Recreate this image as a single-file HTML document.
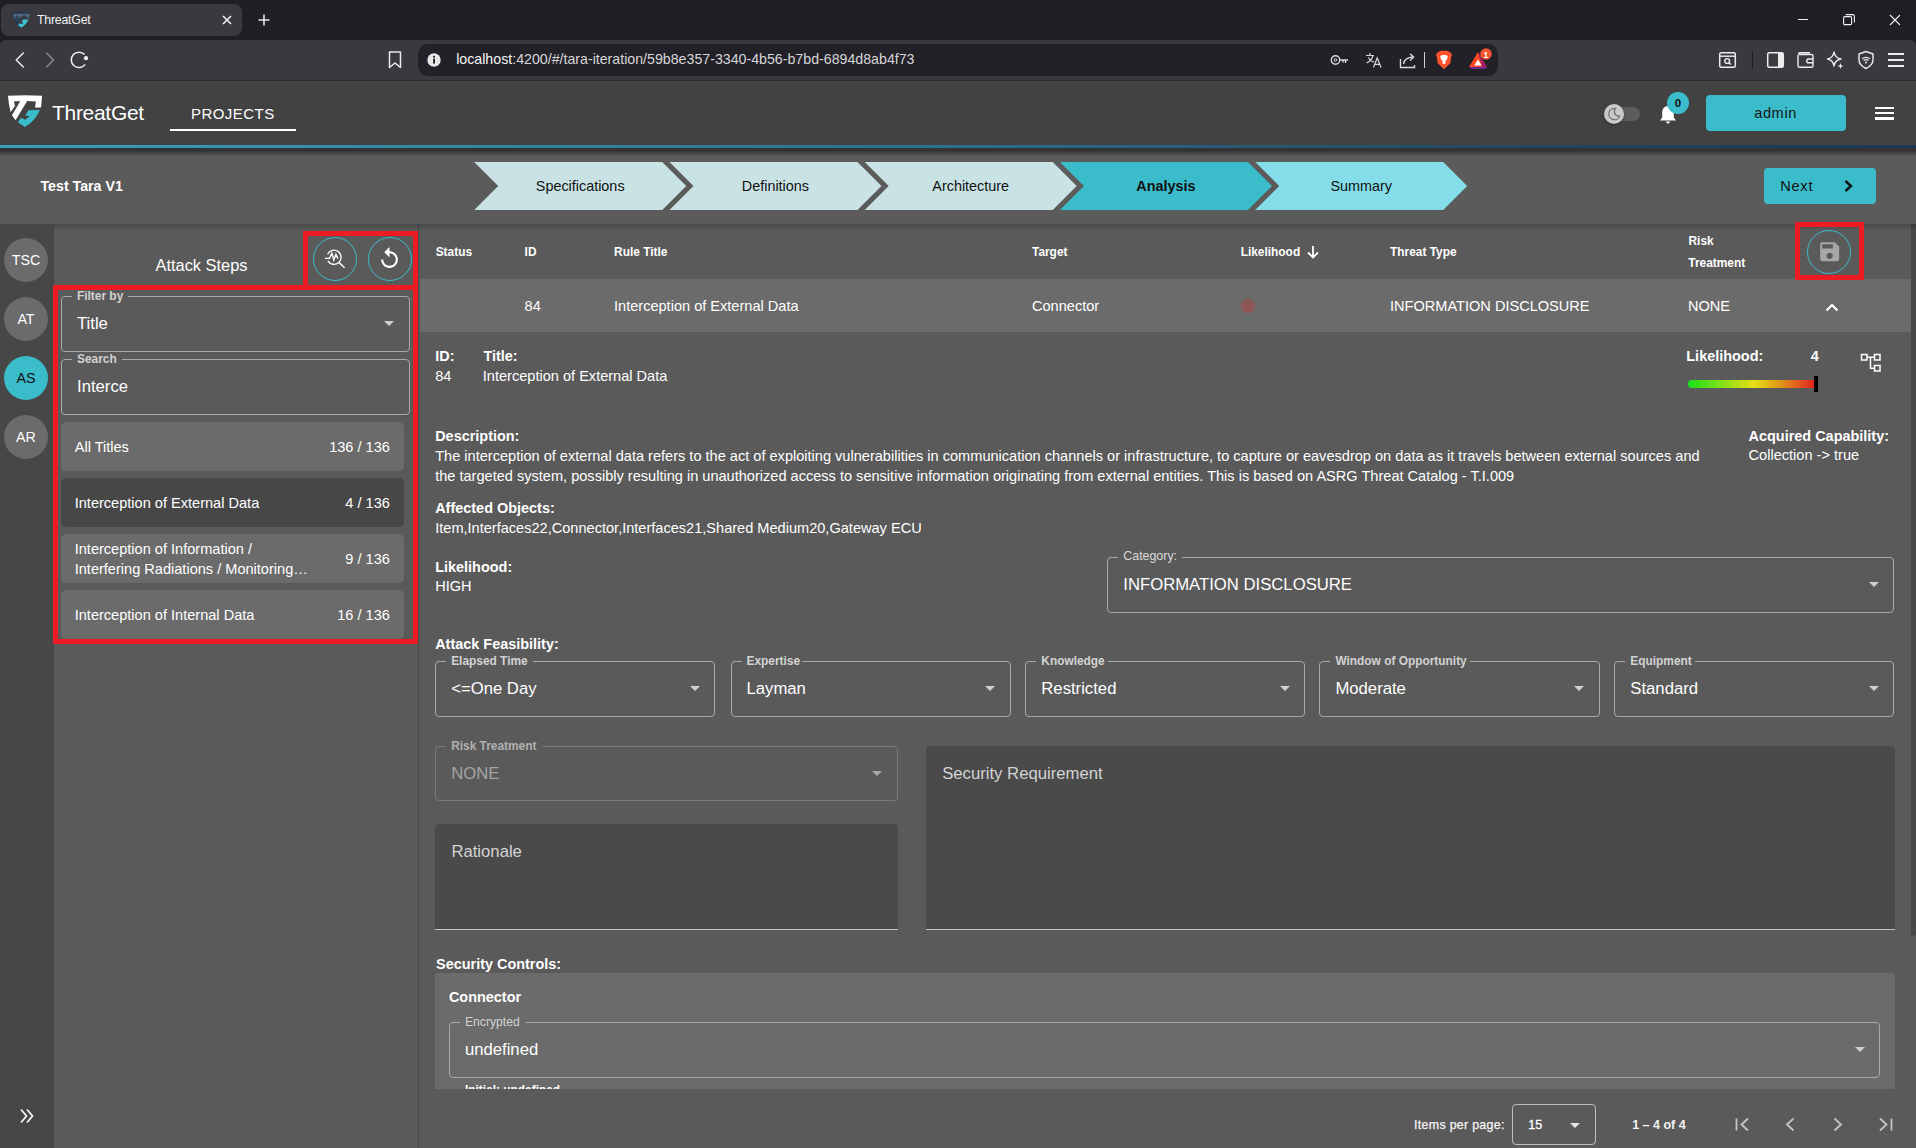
<!DOCTYPE html>
<html><head><meta charset="utf-8">
<style>
*{box-sizing:border-box;margin:0;padding:0}
html,body{width:1916px;height:1148px;overflow:hidden;background:#5a5a5a;font-family:"Liberation Sans",sans-serif;color:#fff}
.a{position:absolute}
.t{position:absolute;white-space:nowrap}
svg{position:absolute;overflow:visible}
</style></head>
<body>
<div class="a" style="left:0px;top:0px;width:1916px;height:50px;background:#1f1e24"></div>
<div class="a" style="left:1px;top:4px;width:241px;height:32px;background:#3a393f;border-radius:8px"></div>
<div class="a" style="left:0px;top:40px;width:1916px;height:41px;background:#3a393f;border-radius:6px 6px 0 0"></div>
<div class="a" style="left:418px;top:44px;width:1080px;height:32px;background:#222127;border-radius:10px"></div>
<div class="t" style="left:37px;top:13.26px;font-size:12.4px;line-height:14.88px;color:#f1f1f1;letter-spacing:-0.25px;">ThreatGet</div>
<svg style="left:12.5px;top:11.6px" width="16.9" height="16" viewBox="3 2 36 34"><defs><linearGradient id="fg" x1="0" y1="0" x2="0" y2="1"><stop offset="0" stop-color="#0f2b4a"/><stop offset="0.22" stop-color="#5f7890"/><stop offset="0.45" stop-color="#2e4d6c"/><stop offset="1" stop-color="#15314f"/></linearGradient></defs><path d="M3.97,3.81 Q21.2,2.6 38.07,3.81 L37.07,15.56 L30.95,15.56 L31.94,9.43 L23.17,9.1 L11.59,28.14 L7.94,23.34 L16.22,9.27 L10.1,9.27 L10.92,13.9 L6.62,20.36 Q4.5,12 3.97,3.81 Z" fill="url(#fg)"/><path d="M35.9,18.04 L24.5,18.2 L21.2,23.5 L25.5,24.33 L21.2,27.8 L16.9,25.8 L13.9,30.3 L20.85,34.9 Q30.5,30 35.9,18.04 Z" fill="#3cc6d6"/></svg>
<svg style="left:222px;top:15px" width="10" height="10" viewBox="0 0 10 10"><path d="M1 1 L9 9 M9 1 L1 9" stroke="#f0f0f0" stroke-width="1.6"/></svg>
<svg style="left:258px;top:14px" width="12" height="12" viewBox="0 0 12 12"><path d="M6 0.5 L6 11.5 M0.5 6 L11.5 6" stroke="#e8e8e8" stroke-width="1.6"/></svg>
<div class="a" style="left:1798px;top:19px;width:10px;height:1.2px;background:#f0f0f0"></div>
<svg style="left:1843px;top:14px" width="12" height="12" viewBox="0 0 12 12"><rect x="0.6" y="2.6" width="8" height="8" rx="1.2" fill="none" stroke="#f0f0f0" stroke-width="1.1"/><path d="M2.6 0.6 L9.6 0.6 Q11.4 0.6 11.4 2.4 L11.4 8.6" fill="none" stroke="#f0f0f0" stroke-width="1.1"/></svg>
<svg style="left:1889px;top:14px" width="12" height="12" viewBox="0 0 12 12"><path d="M1 1 L11 11 M11 1 L1 11" stroke="#f0f0f0" stroke-width="1.1"/></svg>
<svg style="left:0;top:40px" width="120" height="40" viewBox="0 40 120 40"><path d="M23.8 52.5 L16.3 60 L23.8 67.5" fill="none" stroke="#f2f2f2" stroke-width="1.4"/><path d="M46.3 52.8 L53.5 60 L46.3 67.2" fill="none" stroke="#8a8a8e" stroke-width="1.4"/><path d="M85.2 64.4 A7.7 7.7 0 1 1 84.6 54.6" fill="none" stroke="#f2f2f2" stroke-width="1.5"/><circle cx="86" cy="58.2" r="2.1" fill="#f2f2f2"/></svg>
<svg style="left:387px;top:51px" width="16" height="18" viewBox="0 0 16 18"><path d="M2.5 1 L13.5 1 L13.5 16.5 L8 12 L2.5 16.5 Z" fill="none" stroke="#ececec" stroke-width="1.5" stroke-linejoin="round"/></svg>
<svg style="left:427px;top:53px" width="14" height="14" viewBox="0 0 14 14"><circle cx="7" cy="7" r="6.7" fill="#e6e6e6"/><rect x="6.1" y="5.6" width="1.9" height="5" fill="#222127"/><rect x="6.1" y="2.9" width="1.9" height="1.8" fill="#222127"/></svg>
<div class="t" style="left:456.2px;top:51.3px;font-size:14.2px;line-height:17px;color:#d6d6d8"><span style="color:#f4f4f4">localhost</span>:4200/#/tara-iteration/59b8e357-3340-4b56-b7bd-6894d8ab4f73</div>
<svg style="left:1330px;top:52px" width="20" height="16" viewBox="0 0 20 16"><circle cx="5.5" cy="8" r="4.2" fill="none" stroke="#d8d8d8" stroke-width="1.4"/><circle cx="5.5" cy="8" r="1.3" fill="none" stroke="#d8d8d8" stroke-width="1"/><path d="M9.7 8 L18 8 M15.5 8 L15.5 11 M13 8 L13 10.5" fill="none" stroke="#d8d8d8" stroke-width="1.4"/></svg>
<svg style="left:1365px;top:52px" width="18" height="16" viewBox="0 0 18 16"><path d="M1 3.5 L9 3.5 M5 1 L5 3.5 M8 3.5 Q6.5 9 1.5 11 M3.5 5.5 Q5.5 9.5 9 10" fill="none" stroke="#d8d8d8" stroke-width="1.2"/><path d="M8.5 15.5 L12.2 6 L16 15.5 M9.8 12.3 L14.6 12.3" fill="none" stroke="#d8d8d8" stroke-width="1.2"/></svg>
<svg style="left:1399px;top:52px" width="18" height="17" viewBox="0 0 18 17"><path d="M1.5 7 L1.5 15.5 L15.5 15.5 L15.5 13" fill="none" stroke="#d8d8d8" stroke-width="1.4"/><path d="M4.5 12 Q5.5 5.5 14 5 M11 1.8 L14.6 5 L11 8.4" fill="none" stroke="#d8d8d8" stroke-width="1.4"/></svg>
<div class="a" style="left:1424px;top:52px;width:1.3px;height:16px;background:#d0d0d0"></div>
<svg style="left:1435px;top:50px" width="18" height="20" viewBox="0 0 18 20"><path d="M3 2 L6 0.8 L12 0.8 L15 2 L17 4.5 L16 8 L15.5 13 L9 19.2 L2.5 13 L2 8 L1 4.5 Z" fill="#fb542b"/><path d="M5.2 6 L7.5 5 L10.5 5 L12.8 6 L12 9.5 L10.2 11 L10.8 13 L9 14.2 L7.2 13 L7.8 11 L6 9.5 Z" fill="#fff"/></svg>
<svg style="left:1468px;top:47px" width="28" height="24" viewBox="0 0 28 24"><path d="M10 5 L1 20 L19 20 Z" fill="#ff4724"/><path d="M10 5 L19 20 L14 20 Z" fill="#9e1f63"/><path d="M1 20 L19 20 L17 22 L3 22 Z" fill="#662d91"/><path d="M10 12.5 L6.3 18.5 L13.7 18.5 Z" fill="#fff"/><circle cx="18" cy="7" r="5.8" fill="#f4542f"/></svg>
<div class="t" style="left:1185.9px;width:600px;text-align:center;top:50.05px;font-size:8.5px;line-height:10.2px;color:#fff;font-weight:700;">1</div>
<svg style="left:1718px;top:51px" width="20" height="18" viewBox="0 0 20 18"><rect x="1.7" y="1.7" width="15.6" height="14.6" rx="1.5" fill="none" stroke="#ececec" stroke-width="1.5"/><path d="M1.7 5.2 L17.3 5.2" stroke="#ececec" stroke-width="1.4"/><circle cx="9.2" cy="10" r="2.4" fill="none" stroke="#ececec" stroke-width="1.4"/><path d="M10.9 11.7 L12.8 13.6" stroke="#ececec" stroke-width="1.4"/></svg>
<div class="a" style="left:1751.5px;top:52px;width:1.5px;height:16px;background:#1d1c21"></div>
<svg style="left:1766px;top:51px" width="20" height="18" viewBox="0 0 20 18"><rect x="1.7" y="1.7" width="15.6" height="14.6" rx="1.5" fill="none" stroke="#ececec" stroke-width="1.5"/><rect x="12" y="2" width="5" height="14" fill="#ececec"/></svg>
<svg style="left:1796px;top:51px" width="20" height="18" viewBox="0 0 20 18"><path d="M2 4 L2 14.8 Q2 16.3 3.5 16.3 L15.5 16.3 Q17 16.3 17 14.8 L17 5 Q17 3.5 15.5 3.5 L3 3.5 M3 3.5 Q2 2 4 1.8 L14 1.8" fill="none" stroke="#ececec" stroke-width="1.4"/><path d="M17 8 L12.5 8 Q10.8 8 10.8 9.9 Q10.8 11.8 12.5 11.8 L17 11.8" fill="none" stroke="#ececec" stroke-width="1.4"/></svg>
<svg style="left:1826px;top:50px" width="20" height="20" viewBox="0 0 20 20"><path d="M8 2 Q9 8 15 9 Q9 10 8 16 Q7 10 1.5 9 Q7 8 8 2 Z" fill="none" stroke="#ececec" stroke-width="1.4" stroke-linejoin="round"/><path d="M14.5 13 L15.3 15.2 L17.5 16 L15.3 16.8 L14.5 19 L13.7 16.8 L11.5 16 L13.7 15.2 Z" fill="#ececec"/></svg>
<svg style="left:1857px;top:50px" width="18" height="20" viewBox="0 0 18 20"><path d="M9 1.5 L16 4 L16 10 Q16 15 9 18.5 Q2 15 2 10 L2 4 Z" fill="none" stroke="#ececec" stroke-width="1.4" stroke-linejoin="round"/><path d="M5.2 8.8 Q9 5.8 12.8 8.8 M6.6 10.6 Q9 8.8 11.4 10.6" fill="none" stroke="#ececec" stroke-width="1.2"/><circle cx="9" cy="12.6" r="1" fill="#ececec"/></svg>
<div class="a" style="left:1887.7px;top:53.3px;width:16.3px;height:1.5px;background:#ececec"></div>
<div class="a" style="left:1887.7px;top:59.3px;width:16.3px;height:1.5px;background:#ececec"></div>
<div class="a" style="left:1887.7px;top:65.3px;width:16.3px;height:1.5px;background:#ececec"></div>
<div class="a" style="left:0px;top:81px;width:1916px;height:64px;background:#424242"></div>
<div class="a" style="left:0px;top:80px;width:1916px;height:1px;background:#2c2b30"></div>
<div class="a" style="left:0px;top:145px;width:1916px;height:3px;background:linear-gradient(90deg,#389fbc 0%,#2b6f8c 50%,#214663 80%,#1c3753 100%)"></div>
<div class="a" style="left:0px;top:148px;width:1916px;height:76px;background:#5b5b5b"></div>
<div class="a" style="left:0px;top:148px;width:1916px;height:8px;background:linear-gradient(#323232 0%,#343434 35%,rgba(91,91,91,0) 100%)"></div>
<svg style="left:4px;top:92px" width="42" height="38" viewBox="0 0 42 38"><path d="M3.97,3.81 Q21.2,2.6 38.07,3.81 L37.07,15.56 L30.95,15.56 L31.94,9.43 L23.17,9.1 L11.59,28.14 L7.94,23.34 L16.22,9.27 L10.1,9.27 L10.92,13.9 L6.62,20.36 Q4.5,12 3.97,3.81 Z" fill="#fff"/><path d="M35.9,18.04 L24.5,18.2 L21.2,23.5 L25.5,24.33 L21.2,27.8 L16.9,25.8 L13.9,30.3 L20.85,34.9 Q30.5,30 35.9,18.04 Z" fill="#3bbccb"/></svg>
<div class="t" style="left:52px;top:100.42px;font-size:21px;line-height:25.2px;color:#fff;letter-spacing:-0.3px;">ThreatGet</div>
<div class="t" style="left:191px;top:104.90px;font-size:15px;line-height:18.0px;color:#fff;letter-spacing:0.45px;">PROJECTS</div>
<div class="a" style="left:170px;top:129px;width:126px;height:2px;background:#fff"></div>
<div class="t" style="left:40.5px;top:178.16px;font-size:14.2px;line-height:17.04px;color:#fff;font-weight:700;">Test Tara V1</div>
<div class="a" style="left:0px;top:224px;width:54px;height:924px;background:#474747"></div>
<div class="a" style="left:54px;top:224px;width:364px;height:924px;background:#5a5a5a"></div>
<div class="a" style="left:418px;top:224px;width:1px;height:924px;background:#4a4a4a"></div>
<div class="a" style="left:419px;top:224px;width:1497px;height:924px;background:#5a5a5a"></div>
<div class="a" style="left:1911px;top:224px;width:5px;height:712px;background:#474747;border-radius:0 0 3px 3px"></div>
<div class="a" style="left:54px;top:224px;width:1862px;height:6px;background:linear-gradient(rgba(0,0,0,.2),rgba(0,0,0,0))"></div>
<div class="a" style="left:0px;top:224px;width:54px;height:1px;background:#444"></div>
<svg style="left:0;top:0" width="1916" height="1148"><polygon points="474.2,162 662.2,162 686.2,186 662.2,210 474.2,210 498.2,186" fill="#c9e3e5"/><polygon points="669.45,162 857.45,162 881.45,186 857.45,210 669.45,210 693.45,186" fill="#c9e3e5"/><polygon points="864.7,162 1052.7,162 1076.7,186 1052.7,210 864.7,210 888.7,186" fill="#c9e3e5"/><polygon points="1059.95,162 1247.95,162 1271.95,186 1247.95,210 1059.95,210 1083.95,186" fill="#3bbccb"/><polygon points="1255.2,162 1443.2,162 1467.2,186 1443.2,210 1255.2,210 1279.2,186" fill="#84dde8"/></svg>
<div class="t" style="left:280.20000000000005px;width:600px;text-align:center;top:178.17px;font-size:14.4px;line-height:17.28px;color:#111;">Specifications</div>
<div class="t" style="left:475.45000000000005px;width:600px;text-align:center;top:178.17px;font-size:14.4px;line-height:17.28px;color:#111;">Definitions</div>
<div class="t" style="left:670.7px;width:600px;text-align:center;top:178.17px;font-size:14.4px;line-height:17.28px;color:#111;">Architecture</div>
<div class="t" style="left:865.95px;width:600px;text-align:center;top:178.17px;font-size:14.4px;line-height:17.28px;color:#111;font-weight:700;">Analysis</div>
<div class="t" style="left:1061.2px;width:600px;text-align:center;top:178.17px;font-size:14.4px;line-height:17.28px;color:#111;">Summary</div>
<div class="a" style="left:1764px;top:168px;width:112px;height:36px;background:#3bbccb;border-radius:4px"></div>
<div class="t" style="left:1780.2px;top:177.98px;font-size:14.6px;line-height:17.52px;color:#111;letter-spacing:0.75px;">Next</div>
<svg style="left:1843px;top:180px" width="12" height="12" viewBox="0 0 12 12"><path d="M2.5 1 L8 6 L2.5 11" fill="none" stroke="#111" stroke-width="2.4"/></svg>
<div class="a" style="left:1706px;top:95px;width:140px;height:36px;background:#3bbccb;border-radius:4px"></div>
<div class="t" style="left:1754.2px;top:104.58px;font-size:14.6px;line-height:17.52px;color:#151515;letter-spacing:0.6px;">admin</div>
<div class="a" style="left:1874.5px;top:106.8px;width:19.2px;height:2.3px;background:#fff"></div>
<div class="a" style="left:1874.5px;top:112.1px;width:19.2px;height:2.3px;background:#fff"></div>
<div class="a" style="left:1874.5px;top:117.4px;width:19.2px;height:2.3px;background:#fff"></div>
<div class="a" style="left:1612px;top:107px;width:28px;height:14px;background:#5c5c5c;border-radius:7px"></div>
<div class="a" style="left:1604px;top:104px;width:20px;height:20px;background:#cacaca;border-radius:50%;box-shadow:0 1px 2px rgba(0,0,0,.4)"></div>
<svg style="left:1606px;top:106px" width="16" height="16" viewBox="0 0 16 16"><path d="M9.5 2.6 A5.6 5.6 0 1 0 13.6 10.2 A4.6 4.6 0 0 1 9.5 2.6 Z" fill="none" stroke="#707070" stroke-width="1.3"/></svg>
<svg style="left:1658px;top:104px" width="20" height="21" viewBox="0 0 20 21"><path d="M10 2 C6.2 2 4.2 5 4.2 8.5 L4.2 13.5 L2 16.5 L18 16.5 L15.8 13.5 L15.8 8.5 C15.8 5 13.8 2 10 2 Z" fill="#fff"/><path d="M8 17.5 A2 2 0 0 0 12 17.5 Z" fill="#fff"/></svg>
<div class="a" style="left:1667px;top:92px;width:22px;height:22px;background:#3bbccb;border-radius:50%"></div>
<div class="t" style="left:1378px;width:600px;text-align:center;top:96.52px;font-size:11.5px;line-height:13.8px;color:#111;font-weight:700;">0</div>
<div class="a" style="left:4px;top:238.39999999999998px;width:44px;height:44px;background:#6b6b6b;border-radius:50%"></div>
<div class="t" style="left:-274px;width:600px;text-align:center;top:252.17px;font-size:14.3px;line-height:17.16px;color:#fff;">TSC</div>
<div class="a" style="left:4px;top:297.2px;width:44px;height:44px;background:#6b6b6b;border-radius:50%"></div>
<div class="t" style="left:-274px;width:600px;text-align:center;top:310.97px;font-size:14.3px;line-height:17.16px;color:#fff;">AT</div>
<div class="a" style="left:4px;top:356.0px;width:44px;height:44px;background:#3bbccb;border-radius:50%"></div>
<div class="t" style="left:-274px;width:600px;text-align:center;top:369.77px;font-size:14.3px;line-height:17.16px;color:#111;">AS</div>
<div class="a" style="left:4px;top:414.79999999999995px;width:44px;height:44px;background:#6b6b6b;border-radius:50%"></div>
<div class="t" style="left:-274px;width:600px;text-align:center;top:428.57px;font-size:14.3px;line-height:17.16px;color:#fff;">AR</div>
<svg style="left:18px;top:1107px" width="18" height="18" viewBox="0 0 18 18"><path d="M3 2.5 L8.5 9 L3 15.5 M9 2.5 L14.5 9 L9 15.5" fill="none" stroke="#fafafa" stroke-width="1.7"/></svg>
<div class="t" style="left:155.5px;top:255.78px;font-size:16.4px;line-height:19.68px;color:#fff;">Attack Steps</div>
<div class="a" style="left:313px;top:237px;width:44px;height:44px;border:1px solid #3bbccb;border-radius:50%"></div>
<div class="a" style="left:368px;top:237px;width:44px;height:44px;border:1px solid #3bbccb;border-radius:50%"></div>
<svg style="left:320px;top:244px" width="30" height="30" viewBox="320 244 30 30"><path d="M327.6 254.2 A7.1 7.1 0 1 1 327.9 260.9" fill="none" stroke="#fff" stroke-width="1.35"/><path d="M338.7 262.2 L344.6 267.8" stroke="#fff" stroke-width="1.5"/><path d="M324.9 258.4 L329.4 258.4 L331.9 253.2 L333.8 260 L335.9 254.2 L337.9 258.6" fill="none" stroke="#fff" stroke-width="1.35" stroke-linejoin="miter"/></svg>
<svg style="left:377.2px;top:246.3px" width="25" height="25" viewBox="0 0 24 24"><path d="M12 5V1L7 6l5 5V7c3.31 0 6 2.69 6 6s-2.69 6-6 6-6-2.69-6-6H4c0 4.42 3.58 8 8 8s8-3.58 8-8-3.58-8-8-8z" fill="#fff"/></svg>
<div class="a" style="left:61px;top:296px;width:349px;height:55.5px;border:1px solid #a9a9a9;border-radius:4px;"></div>
<div class="a" style="left:72px;top:294px;width:56px;height:4px;background:#5a5a5a"></div>
<div class="t" style="left:77px;top:288.94px;font-size:11.9px;line-height:14.28px;color:#d2d2d2;font-weight:700;">Filter by</div>
<div class="t" style="left:77px;top:314.29px;font-size:16.7px;line-height:20.04px;color:#fff;">Title</div>
<svg style="left:384.2px;top:321px" width="10" height="5" viewBox="0 0 10 5"><path d="M0 0 L10 0 L5 5 Z" fill="#cfcfcf"/></svg>
<div class="a" style="left:61px;top:359px;width:349px;height:55.5px;border:1px solid #a9a9a9;border-radius:4px;"></div>
<div class="a" style="left:72px;top:357px;width:50px;height:4px;background:#5a5a5a"></div>
<div class="t" style="left:77px;top:351.94px;font-size:11.9px;line-height:14.28px;color:#d2d2d2;font-weight:700;">Search</div>
<div class="t" style="left:77px;top:377.29px;font-size:16.7px;line-height:20.04px;color:#fff;">Interce</div>
<div class="a" style="left:61px;top:422px;width:343px;height:48.6px;background:#6b6b6b;border-radius:5px"></div>
<div class="t" style="left:74.7px;top:439.01px;font-size:14.57px;line-height:17.48px;color:#fff;">All Titles</div>
<div class="t" style="right:1526.1px;top:439.01px;font-size:14.57px;line-height:17.48px;color:#fff;">136 / 136</div>
<div class="a" style="left:61px;top:478px;width:343px;height:48.6px;background:#474747;border-radius:5px"></div>
<div class="t" style="left:74.7px;top:495.01px;font-size:14.57px;line-height:17.48px;color:#fff;">Interception of External Data</div>
<div class="t" style="right:1526.1px;top:495.01px;font-size:14.57px;line-height:17.48px;color:#fff;">4 / 136</div>
<div class="a" style="left:61px;top:534px;width:343px;height:48.6px;background:#6b6b6b;border-radius:5px"></div>
<div class="t" style="right:1526.1px;top:551.01px;font-size:14.57px;line-height:17.48px;color:#fff;">9 / 136</div>
<div class="a" style="left:61px;top:590px;width:343px;height:48.6px;background:#6b6b6b;border-radius:5px"></div>
<div class="t" style="left:74.7px;top:607.01px;font-size:14.57px;line-height:17.48px;color:#fff;">Interception of Internal Data</div>
<div class="t" style="right:1526.1px;top:607.01px;font-size:14.57px;line-height:17.48px;color:#fff;">16 / 136</div>
<div class="t" style="left:74.7px;top:540.81px;font-size:14.57px;line-height:17.48px;color:#fff;">Interception of Information /</div>
<div class="t" style="left:74.7px;top:561.11px;font-size:14.57px;line-height:17.48px;color:#fff;">Interfering Radiations / Monitoring…</div>
<div class="a" style="left:303px;top:231px;width:115px;height:59px;border:5px solid #ed1c24"></div>
<div class="a" style="left:53px;top:285px;width:364.5px;height:359px;border:5px solid #ed1c24"></div>
<div class="a" style="left:420px;top:279px;width:1491px;height:53px;background:#6b6b6b"></div>
<div class="t" style="left:435.7px;top:244.84px;font-size:11.9px;line-height:14.28px;color:#fff;font-weight:700;">Status</div>
<div class="t" style="left:524.6px;top:244.84px;font-size:11.9px;line-height:14.28px;color:#fff;font-weight:700;">ID</div>
<div class="t" style="left:614.1px;top:244.84px;font-size:11.9px;line-height:14.28px;color:#fff;font-weight:700;">Rule Title</div>
<div class="t" style="left:1032px;top:244.84px;font-size:11.9px;line-height:14.28px;color:#fff;font-weight:700;">Target</div>
<div class="t" style="left:1240.7px;top:244.84px;font-size:11.9px;line-height:14.28px;color:#fff;font-weight:700;">Likelihood</div>
<svg style="left:1306px;top:245px" width="14" height="14" viewBox="0 0 14 14"><path d="M7 1 L7 12.5 M2 7.5 L7 12.5 L12 7.5" fill="none" stroke="#fff" stroke-width="1.8"/></svg>
<div class="t" style="left:1390.1px;top:244.84px;font-size:11.9px;line-height:14.28px;color:#fff;font-weight:700;">Threat Type</div>
<div class="t" style="left:1688.5px;top:234.24px;font-size:11.9px;line-height:14.28px;color:#fff;font-weight:700;">Risk</div>
<div class="t" style="left:1688.3px;top:256.24px;font-size:11.9px;line-height:14.28px;color:#fff;font-weight:700;">Treatment</div>
<div class="a" style="left:1807px;top:230px;width:44px;height:44px;border:1px solid #3bbccb;border-radius:50%"></div>
<svg style="left:1816.5px;top:239.2px" width="25.3" height="25.3" viewBox="0 0 24 24"><path d="M17 3H5c-1.11 0-2 .9-2 2v14c0 1.1.89 2 2 2h14c1.1 0 2-.9 2-2V7l-4-4zm-5 16c-1.66 0-3-1.34-3-3s1.34-3 3-3 3 1.34 3 3-1.34 3-3 3zm3-10H5V5h10v4z" fill="#a6a6a6"/></svg>
<div class="a" style="left:1795px;top:222px;width:69px;height:58px;border:5px solid #ed1c24"></div>
<div class="t" style="left:524.6px;top:297.81px;font-size:14.57px;line-height:17.48px;color:#fff;">84</div>
<div class="t" style="left:614px;top:297.81px;font-size:14.57px;line-height:17.48px;color:#fff;">Interception of External Data</div>
<div class="t" style="left:1032px;top:297.81px;font-size:14.57px;line-height:17.48px;color:#fff;">Connector</div>
<div class="a" style="left:1241px;top:299px;width:14px;height:14px;background:#8f5656;border-radius:50%"></div>
<div class="t" style="left:1390px;top:297.81px;font-size:14.57px;line-height:17.48px;color:#fff;">INFORMATION DISCLOSURE</div>
<div class="t" style="left:1688px;top:297.81px;font-size:14.57px;line-height:17.48px;color:#fff;">NONE</div>
<svg style="left:1825px;top:302px" width="14" height="10" viewBox="0 0 14 10"><path d="M1.5 8.5 L7 3 L12.5 8.5" fill="none" stroke="#fff" stroke-width="2.2"/></svg>
<div class="t" style="left:435.2px;top:348.02px;font-size:14.45px;line-height:17.34px;color:#fff;font-weight:700;">ID:</div>
<div class="t" style="left:435.2px;top:367.61px;font-size:14.57px;line-height:17.48px;color:#fff;">84</div>
<div class="t" style="left:483.4px;top:348.02px;font-size:14.45px;line-height:17.34px;color:#fff;font-weight:700;">Title:</div>
<div class="t" style="left:482.8px;top:367.61px;font-size:14.57px;line-height:17.48px;color:#fff;">Interception of External Data</div>
<div class="t" style="left:1686.3px;top:347.82px;font-size:14.45px;line-height:17.34px;color:#fff;font-weight:700;">Likelihood:</div>
<div class="t" style="left:1810.7px;top:347.82px;font-size:14.45px;line-height:17.34px;color:#fff;font-weight:700;">4</div>
<div class="a" style="left:1688px;top:380px;width:126px;height:8px;background:linear-gradient(90deg,#17e017 0%,#7ee01a 25%,#e3e014 52%,#e0901a 75%,#e0241e 100%);border-radius:4px 0 0 4px"></div>
<div class="a" style="left:1814px;top:376px;width:3.6px;height:16px;background:#000"></div>
<svg style="left:1860px;top:353px" width="22" height="20" viewBox="0 0 22 20"><rect x="1.5" y="1.5" width="5.5" height="5.5" fill="none" stroke="#fff" stroke-width="1.5"/><rect x="14.5" y="1.5" width="5.5" height="5.5" fill="none" stroke="#fff" stroke-width="1.5"/><rect x="14.5" y="12.5" width="5.5" height="5.5" fill="none" stroke="#fff" stroke-width="1.5"/><path d="M7 4.2 L14.5 4.2 M10.5 4.2 L10.5 15.2 L14.5 15.2" fill="none" stroke="#fff" stroke-width="1.5"/></svg>
<div class="t" style="left:435.2px;top:427.72px;font-size:14.45px;line-height:17.34px;color:#fff;font-weight:700;">Description:</div>
<div class="t" style="left:435.2px;top:448.01px;font-size:14.57px;line-height:17.48px;color:#fff;">The interception of external data refers to the act of exploiting vulnerabilities in communication channels or infrastructure, to capture or eavesdrop on data as it travels between external sources and</div>
<div class="t" style="left:435.2px;top:467.71px;font-size:14.57px;line-height:17.48px;color:#fff;">the targeted system, possibly resulting in unauthorized access to sensitive information originating from external entities. This is based on ASRG Threat Catalog - T.I.009</div>
<div class="t" style="left:1748.6px;top:427.52px;font-size:14.45px;line-height:17.34px;color:#fff;font-weight:700;">Acquired Capability:</div>
<div class="t" style="left:1748.6px;top:447.41px;font-size:14.57px;line-height:17.48px;color:#fff;">Collection -&gt; true</div>
<div class="t" style="left:435.2px;top:500.22px;font-size:14.45px;line-height:17.34px;color:#fff;font-weight:700;">Affected Objects:</div>
<div class="t" style="left:435.2px;top:519.81px;font-size:14.57px;line-height:17.48px;color:#fff;">Item,Interfaces22,Connector,Interfaces21,Shared Medium20,Gateway ECU</div>
<div class="t" style="left:435.2px;top:559.12px;font-size:14.45px;line-height:17.34px;color:#fff;font-weight:700;">Likelihood:</div>
<div class="t" style="left:435.2px;top:578.31px;font-size:14.57px;line-height:17.48px;color:#fff;">HIGH</div>
<div class="a" style="left:1107.3px;top:557px;width:787px;height:55.5px;border:1px solid #a9a9a9;border-radius:4px;"></div>
<div class="a" style="left:1118.3px;top:555px;width:64px;height:4px;background:#5a5a5a"></div>
<div class="t" style="left:1123.3px;top:549.46px;font-size:12.4px;line-height:14.88px;color:#dadada;">Category:</div>
<div class="t" style="left:1123.3px;top:575.29px;font-size:16.7px;line-height:20.04px;color:#fff;">INFORMATION DISCLOSURE</div>
<svg style="left:1868.5px;top:582px" width="10" height="5" viewBox="0 0 10 5"><path d="M0 0 L10 0 L5 5 Z" fill="#cfcfcf"/></svg>
<div class="t" style="left:435.2px;top:636.42px;font-size:14.45px;line-height:17.34px;color:#fff;font-weight:700;">Attack Feasibility:</div>
<div class="a" style="left:435.2px;top:661px;width:280.2px;height:55.5px;border:1px solid #a9a9a9;border-radius:4px;"></div>
<div class="a" style="left:446.2px;top:659px;width:87px;height:4px;background:#5a5a5a"></div>
<div class="t" style="left:451.2px;top:653.94px;font-size:11.9px;line-height:14.28px;color:#d2d2d2;font-weight:700;">Elapsed Time</div>
<div class="t" style="left:451.2px;top:679.29px;font-size:16.7px;line-height:20.04px;color:#fff;">&lt;=One Day</div>
<svg style="left:689.6px;top:686px" width="10" height="5" viewBox="0 0 10 5"><path d="M0 0 L10 0 L5 5 Z" fill="#cfcfcf"/></svg>
<div class="a" style="left:730.5px;top:661px;width:280.2px;height:55.5px;border:1px solid #a9a9a9;border-radius:4px;"></div>
<div class="a" style="left:741.5px;top:659px;width:60px;height:4px;background:#5a5a5a"></div>
<div class="t" style="left:746.5px;top:653.94px;font-size:11.9px;line-height:14.28px;color:#d2d2d2;font-weight:700;">Expertise</div>
<div class="t" style="left:746.5px;top:679.29px;font-size:16.7px;line-height:20.04px;color:#fff;">Layman</div>
<svg style="left:984.9000000000001px;top:686px" width="10" height="5" viewBox="0 0 10 5"><path d="M0 0 L10 0 L5 5 Z" fill="#cfcfcf"/></svg>
<div class="a" style="left:1025.3px;top:661px;width:280.2px;height:55.5px;border:1px solid #a9a9a9;border-radius:4px;"></div>
<div class="a" style="left:1036.3px;top:659px;width:72px;height:4px;background:#5a5a5a"></div>
<div class="t" style="left:1041.3px;top:653.94px;font-size:11.9px;line-height:14.28px;color:#d2d2d2;font-weight:700;">Knowledge</div>
<div class="t" style="left:1041.3px;top:679.29px;font-size:16.7px;line-height:20.04px;color:#fff;">Restricted</div>
<svg style="left:1279.7px;top:686px" width="10" height="5" viewBox="0 0 10 5"><path d="M0 0 L10 0 L5 5 Z" fill="#cfcfcf"/></svg>
<div class="a" style="left:1319.4px;top:661px;width:280.2px;height:55.5px;border:1px solid #a9a9a9;border-radius:4px;"></div>
<div class="a" style="left:1330.4px;top:659px;width:140px;height:4px;background:#5a5a5a"></div>
<div class="t" style="left:1335.4px;top:653.94px;font-size:11.9px;line-height:14.28px;color:#d2d2d2;font-weight:700;">Window of Opportunity</div>
<div class="t" style="left:1335.4px;top:679.29px;font-size:16.7px;line-height:20.04px;color:#fff;">Moderate</div>
<svg style="left:1573.8000000000002px;top:686px" width="10" height="5" viewBox="0 0 10 5"><path d="M0 0 L10 0 L5 5 Z" fill="#cfcfcf"/></svg>
<div class="a" style="left:1614.3px;top:661px;width:280.2px;height:55.5px;border:1px solid #a9a9a9;border-radius:4px;"></div>
<div class="a" style="left:1625.3px;top:659px;width:70px;height:4px;background:#5a5a5a"></div>
<div class="t" style="left:1630.3px;top:653.94px;font-size:11.9px;line-height:14.28px;color:#d2d2d2;font-weight:700;">Equipment</div>
<div class="t" style="left:1630.3px;top:679.29px;font-size:16.7px;line-height:20.04px;color:#fff;">Standard</div>
<svg style="left:1868.7px;top:686px" width="10" height="5" viewBox="0 0 10 5"><path d="M0 0 L10 0 L5 5 Z" fill="#cfcfcf"/></svg>
<div class="a" style="left:435.2px;top:746px;width:462.4px;height:55px;border:1px solid #7a7a7a;border-radius:4px;"></div>
<div class="a" style="left:446.2px;top:744px;width:96px;height:4px;background:#5a5a5a"></div>
<div class="t" style="left:451.2px;top:738.94px;font-size:11.9px;line-height:14.28px;color:#b0b0b0;font-weight:700;">Risk Treatment</div>
<div class="t" style="left:451.2px;top:764.29px;font-size:16.7px;line-height:20.04px;color:#a4a4a4;">NONE</div>
<svg style="left:871.8px;top:771px" width="10" height="5" viewBox="0 0 10 5"><path d="M0 0 L10 0 L5 5 Z" fill="#a8a8a8"/></svg>
<div class="a" style="left:435.2px;top:824.2px;width:462.4px;height:106.2px;background:#4a4a4a;border-radius:4px 4px 0 0;border-bottom:1px solid #c4c4c4"></div>
<div class="t" style="left:451.4px;top:842.49px;font-size:16.7px;line-height:20.04px;color:#d4d4d4;">Rationale</div>
<div class="a" style="left:926px;top:746px;width:969px;height:184.4px;background:#4a4a4a;border-radius:4px 4px 0 0;border-bottom:1px solid #c4c4c4"></div>
<div class="t" style="left:942.2px;top:764.29px;font-size:16.7px;line-height:20.04px;color:#d4d4d4;">Security Requirement</div>
<div class="t" style="left:436px;top:955.72px;font-size:14.45px;line-height:17.34px;color:#fff;font-weight:700;">Security Controls:</div>
<div class="a" style="left:0;top:0;width:1916px;height:1089px;overflow:hidden">
<div class="a" style="left:435.2px;top:973.1px;width:1459.6px;height:200px;background:#6b6b6b;border-radius:4px"></div>
<div class="t" style="left:448.9px;top:988.82px;font-size:14.45px;line-height:17.34px;color:#fff;font-weight:700;">Connector</div>
<div class="a" style="left:448.9px;top:1022.1px;width:1431.5px;height:55.5px;border:1px solid #a9a9a9;border-radius:4px;background:#6b6b6b;"></div>
<div class="a" style="left:459.9px;top:1020.1px;width:66px;height:4px;background:#6b6b6b"></div>
<div class="t" style="left:464.9px;top:1014.75px;font-size:12.2px;line-height:14.64px;color:#d2d2d2;">Encrypted</div>
<div class="t" style="left:464.9px;top:1039.69px;font-size:16.7px;line-height:20.04px;color:#fff;">undefined</div>
<svg style="left:1854.6000000000001px;top:1047.1px" width="10" height="5" viewBox="0 0 10 5"><path d="M0 0 L10 0 L5 5 Z" fill="#cfcfcf"/></svg>
<div class="t" style="left:465px;top:1083.34px;font-size:11.9px;line-height:14.28px;color:#fff;font-weight:700;">Initial: undefined</div>
</div>
<div class="t" style="left:1414.1px;top:1118.06px;font-size:12.4px;line-height:14.88px;color:#f4f4f4;letter-spacing:0.3px;-webkit-text-stroke:0.25px #f4f4f4;">Items per page:</div>
<div class="a" style="left:1512.2px;top:1104.3px;width:83.6px;height:40.5px;border:1px solid #bdbdbd;border-radius:4px"></div>
<div class="t" style="left:1528.3px;top:1117.87px;font-size:12.6px;line-height:15.12px;color:#fff;-webkit-text-stroke:0.3px #fff;">15</div>
<svg style="left:1570px;top:1122.6px" width="10" height="5" viewBox="0 0 10 5"><path d="M0 0 L10 0 L5 5 Z" fill="#e6e6e6"/></svg>
<div class="t" style="left:1632.2px;top:1117.97px;font-size:12.5px;line-height:15.0px;color:#f4f4f4;font-weight:700;">1 – 4 of 4</div>
<svg style="left:1733px;top:1116px" width="20" height="16" viewBox="0 0 20 16"><path d="M3.5 2.5 L3.5 14.5" stroke="#c4c4c4" stroke-width="1.8"/><path d="M15 2.5 L8.5 8.5 L15 14.5" fill="none" stroke="#c4c4c4" stroke-width="1.8"/></svg>
<svg style="left:1782px;top:1116px" width="16" height="16" viewBox="0 0 16 16"><path d="M11.5 2.5 L5 8.5 L11.5 14.5" fill="none" stroke="#c4c4c4" stroke-width="1.8"/></svg>
<svg style="left:1830px;top:1116px" width="16" height="16" viewBox="0 0 16 16"><path d="M4.5 2.5 L11 8.5 L4.5 14.5" fill="none" stroke="#c4c4c4" stroke-width="1.8"/></svg>
<svg style="left:1876px;top:1116px" width="20" height="16" viewBox="0 0 20 16"><path d="M15.5 2.5 L15.5 14.5" stroke="#c4c4c4" stroke-width="1.8"/><path d="M4 2.5 L10.5 8.5 L4 14.5" fill="none" stroke="#c4c4c4" stroke-width="1.8"/></svg>
</body></html>
